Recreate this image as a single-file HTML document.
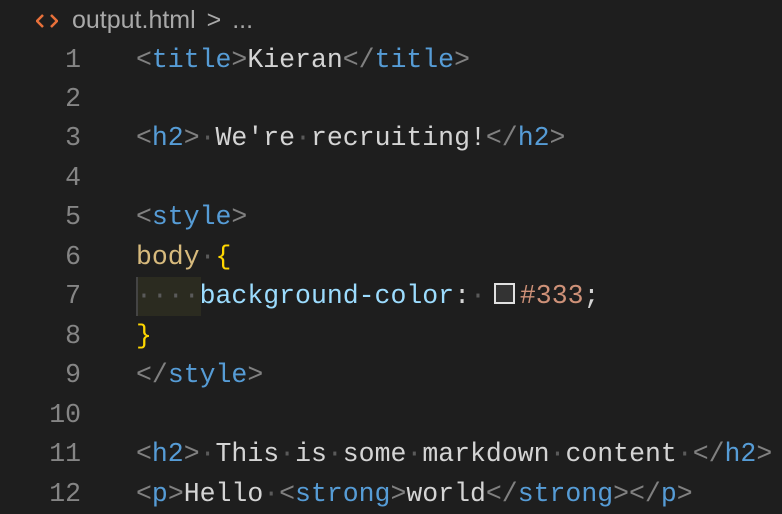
<!DOCTYPE html>
<html><head><style>
body{margin:0;background:#1e1e1e;width:782px;height:513px;overflow:hidden;position:relative}
.bc{position:absolute;left:36px;top:2px;font-family:"Liberation Sans",sans-serif;font-size:25px;color:#a9a9a9;height:36px;line-height:36px}
.ln{position:absolute;left:0;width:81px;text-align:right;font-family:"Liberation Mono",monospace;font-size:26.5px;color:#858585;height:39.45px;line-height:39.45px}
.cd{position:absolute;left:136px;font-family:"Liberation Mono",monospace;font-size:26.5px;color:#d4d4d4;white-space:pre;height:39.45px;line-height:39.45px}
.b{color:#808080}.t{color:#569cd6}.d{color:#5a5a5a}.s{color:#d7ba7d}.y{color:#ffd700}.p{color:#9cdcfe}.v{color:#ce9178}
.sw{display:inline-block;width:17px;height:17px;border:2px solid #e0e0e0;background:#333;vertical-align:-1px;margin:0 5px 0 8px}
</style></head><body>
<div class="bc"><svg width="22" height="16" viewBox="0 0 22 16" style="margin-right:14px;vertical-align:-1px"><path d="M7 2 L1 8 L7 14 M15 2 L21 8 L15 14" fill="none" stroke="#e8703a" stroke-width="2.5"/></svg>output.html <span style="margin:0 4px">&gt;</span> ...</div>
<div style="position:absolute;left:136px;top:277px;width:63px;height:39px;background:#2b2b20;border-left:2px solid #444"></div>
<div class="ln" style="top:40.5px">1</div><div class="cd" style="top:40.5px"><span class="b">&lt;</span><span class="t">title</span><span class="b">&gt;</span>Kieran<span class="b">&lt;/</span><span class="t">title</span><span class="b">&gt;</span></div>
<div class="ln" style="top:80px">2</div>
<div class="ln" style="top:119.4px">3</div><div class="cd" style="top:119.4px"><span class="b">&lt;</span><span class="t">h2</span><span class="b">&gt;</span><span class="d">·</span>We're<span class="d">·</span>recruiting!<span class="b">&lt;/</span><span class="t">h2</span><span class="b">&gt;</span></div>
<div class="ln" style="top:158.9px">4</div>
<div class="ln" style="top:198.3px">5</div><div class="cd" style="top:198.3px"><span class="b">&lt;</span><span class="t">style</span><span class="b">&gt;</span></div>
<div class="ln" style="top:237.8px">6</div><div class="cd" style="top:237.8px"><span class="s">body</span><span class="d">·</span><span class="y">{</span></div>
<div class="ln" style="top:277.2px">7</div><div class="cd" style="top:277.2px"><span class="d">····</span><span class="p">background-color</span>:<span class="d">·</span><span class="sw"></span><span class="v">#333</span>;</div>
<div class="ln" style="top:316.7px">8</div><div class="cd" style="top:316.7px"><span class="y">}</span></div>
<div class="ln" style="top:356.1px">9</div><div class="cd" style="top:356.1px"><span class="b">&lt;/</span><span class="t">style</span><span class="b">&gt;</span></div>
<div class="ln" style="top:395.6px">10</div>
<div class="ln" style="top:435px">11</div><div class="cd" style="top:435px"><span class="b">&lt;</span><span class="t">h2</span><span class="b">&gt;</span><span class="d">·</span>This<span class="d">·</span>is<span class="d">·</span>some<span class="d">·</span>markdown<span class="d">·</span>content<span class="d">·</span><span class="b">&lt;/</span><span class="t">h2</span><span class="b">&gt;</span></div>
<div class="ln" style="top:474.5px">12</div><div class="cd" style="top:474.5px"><span class="b">&lt;</span><span class="t">p</span><span class="b">&gt;</span>Hello<span class="d">·</span><span class="b">&lt;</span><span class="t">strong</span><span class="b">&gt;</span>world<span class="b">&lt;/</span><span class="t">strong</span><span class="b">&gt;&lt;/</span><span class="t">p</span><span class="b">&gt;</span></div>
</body></html>
